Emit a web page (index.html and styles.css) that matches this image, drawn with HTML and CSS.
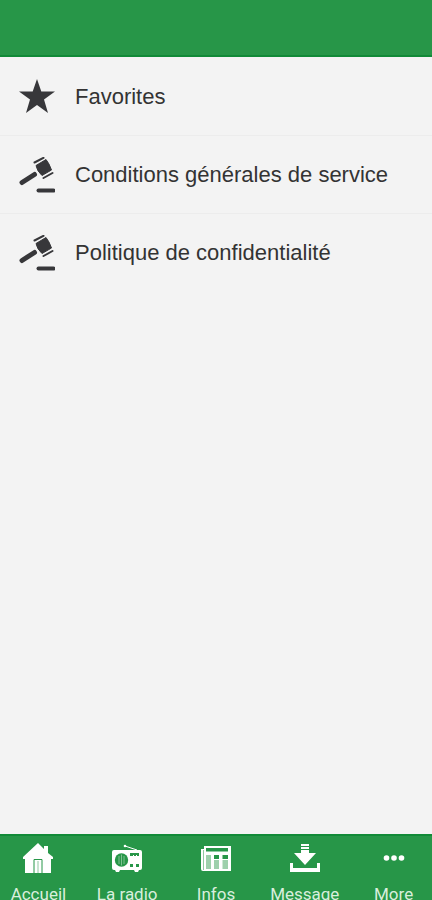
FILE: index.html
```html
<!DOCTYPE html>
<html lang="fr">
<head>
<meta charset="utf-8">
<meta name="viewport" content="width=device-width, initial-scale=1">
<title>More</title>
<link rel="stylesheet" href="styles.css">
</head>
<body>
<svg class="sprite" aria-hidden="true">
  <symbol id="gavel" viewBox="0 0 36 36">
    <path d="M3 25.500L15.500 17.500" stroke="currentColor" stroke-width="5" stroke-linecap="round"/>
    <path d="M17 8.500L27 2.500Q30 6 32.500 13L23 18.500Q18 14 17 8.500Z" fill="currentColor" stroke="currentColor"/>
    <path d="M15.500 5.500L24.500 .8M24.500 21L33.500 16" stroke="currentColor" stroke-width="2" stroke-linecap="round"/>
    <path d="M19.500 33.500H34.500" stroke="currentColor" stroke-width="4" stroke-linecap="round"/>
  </symbol>
</svg>
<header class="topbar"></header>
<main class="content">
  <ul class="menu">
    <li class="menu-row"><a class="menu-link" href="#favorites">
      <svg class="menu-icon" viewBox="0 0 36 36" aria-hidden="true"><path fill="currentColor" d="M18 0L22.300 12.500H36L25 20.500L29 34L18 26L7 34L11 20.500L0 12.500H13.700Z"/></svg>
      <span>Favorites</span></a></li>
    <li class="menu-row"><a class="menu-link" href="#conditions">
      <svg class="menu-icon" aria-hidden="true"><use href="#gavel"/></svg>
      <span>Conditions générales de service</span></a></li>
    <li class="menu-row"><a class="menu-link" href="#confidentialite">
      <svg class="menu-icon" aria-hidden="true"><use href="#gavel"/></svg>
      <span>Politique de confidentialité</span></a></li>
  </ul>
</main>
<nav class="tabs">
  <a class="tab" href="#accueil">
    <svg class="tab-icon" viewBox="0 0 32 32" aria-hidden="true">
      <path fill="currentColor" d="M16 1L22 7V4H26V11L31 15V17H29V31H3V17H1V15Z"/>
      <path class="cut" d="M12 31V17.500H20V31" fill="none"/>
      <path class="cut" d="M16 19V31" opacity=".5"/>
    </svg><span>Accueil</span></a>
  <a class="tab" href="#radio">
    <svg class="tab-icon" viewBox="0 0 32 32" aria-hidden="true">
      <path d="M14 4L26 8" stroke="currentColor" stroke-width="1"/><circle cx="14" cy="4" r="1.300" fill="currentColor"/>
      <path fill="currentColor" d="M3 8H29Q31 8 31 10V26Q31 28 29 28H28L27 30H24L23 28H9L8 30H5L4 28H3Q1 28 1 26V10Q1 8 3 8Z"/>
      <circle class="cut-fill" cx="10.500" cy="18" r="6.700"/>
      <path d="M8 14V22M10.500 12.500V23.500M13 14V22" stroke="currentColor" stroke-width=".8" opacity=".5"/>
      <path class="cut-fill" d="M19 11H28V14H26V13H25V14H23V13H22V14H19ZM19 22H22V25H19ZM25 22H28V25H25Z"/>
    </svg><span>La radio</span></a>
  <a class="tab" href="#infos">
    <svg class="tab-icon" viewBox="0 0 32 32" aria-hidden="true">
      <path d="M4 4H31V29H3Q1 29 1 27V7H4Z" fill="currentColor"/>
      <path class="cut-fill" d="M6 6H28V9.500H6ZM14 13H19V17H14ZM22.500 13H28V17H22.500Z"/>
      <path class="cut-fill" d="M6 13H11V27H6ZM14 18H19V27H14ZM22.500 18H28V27H22.500Z" opacity=".45"/>
      <path class="cut" d="M3.500 8V28" opacity=".5"/>
    </svg><span>Infos</span></a>
  <a class="tab" href="#message">
    <svg class="tab-icon" viewBox="0 0 32 32" aria-hidden="true">
      <path fill="currentColor" d="M12 2H20V4H12ZM12 5H20V7H12ZM12 8H20V11H27L16 23L5 11H12Z"/>
      <path fill="currentColor" d="M1 21H4V26H28V21H31V30H1Z"/>
    </svg><span>Message</span></a>
  <a class="tab" href="#more" aria-current="page">
    <svg class="tab-icon" viewBox="0 0 32 32" aria-hidden="true"><g fill="currentColor"><circle cx="8.500" cy="16" r="2.800"/><circle cx="16" cy="16" r="2.800"/><circle cx="23.500" cy="16" r="2.800"/></g></svg><span>More</span></a>
</nav>
</body>
</html>
```
FILE: styles.css
```css
* { box-sizing: border-box; }
body {
  margin: 0;
  height: 100vh;
  display: flex;
  flex-direction: column;
  overflow: hidden;
  background: #f3f3f3;
  color: #333;
  font-family: "Liberation Sans", Arial, sans-serif;
}
.sprite { display: none; }
.topbar {
  flex: 0 0 57px;
  background: #279648;
  border-bottom: 2px solid #118a37;
}
.content { flex: 1; min-height: 0; }
.menu { margin: 0; padding: 1px 0 0; list-style: none; }
.menu-row { border-bottom: 1px solid #ececec; }
.menu-row:last-child { border-bottom-color: transparent; }
.menu-link {
  display: flex;
  align-items: center;
  gap: 20px;
  height: 77px;
  padding: 0 19px;
  color: inherit;
  font-size: 22px;
  line-height: 28px;
  text-decoration: none;
}
.menu-icon { flex: none; width: 36px; height: 36px; color: #37373a; fill: none; }
.tabs {
  flex: 0 0 66px;
  display: grid;
  grid-template-columns: repeat(5, 1fr);
  margin: 0 -6px;
  overflow: hidden;
  background: #279648;
  border-top: 2px solid #118a37;
}
.tab {
  display: flex;
  flex-direction: column;
  align-items: center;
  gap: 10px;
  padding-top: 6px;
  color: #d9efdd;
  font-family: Roboto, sans-serif;
  font-size: 17px;
  line-height: 20px;
  text-decoration: none;
}
.tab-icon { flex: none; width: 32px; height: 32px; color: #fff; }
.cut { stroke: #279648; stroke-width: 1; }
.cut-fill { fill: #279648; }
```
